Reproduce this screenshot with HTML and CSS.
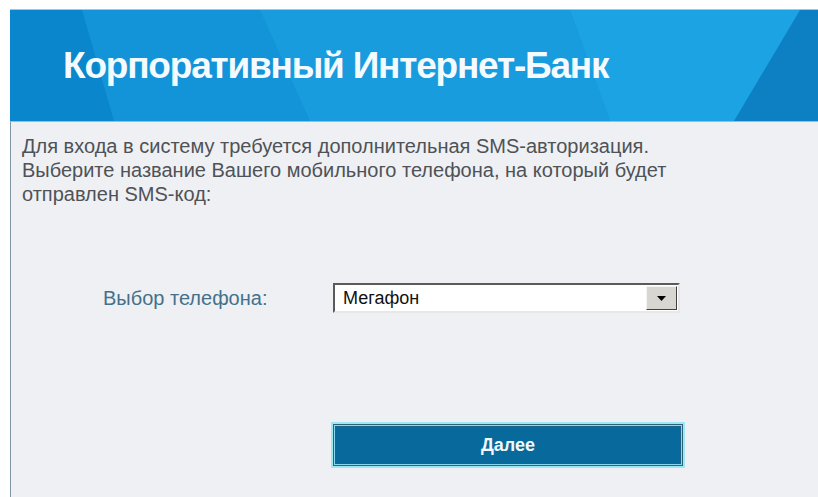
FILE: index.html
```html
<!DOCTYPE html>
<html lang="ru">
<head>
<meta charset="utf-8">
<title>Корпоративный Интернет-Банк</title>
<link rel="stylesheet" href="styles.css">
</head>
<body>
<div class="panel">
  <header class="banner">
    <svg class="banner-bg" viewBox="0 0 808 111" preserveAspectRatio="none" aria-hidden="true">
      <rect width="808" height="111" fill="#1393d8"/>
      <polygon points="0,0 72,0 104,111 0,111" fill="#0a86cd"/>
      <polygon points="250,0 560,0 600,111 300,111" fill="#189cde"/>
      <polygon points="560,0 790,0 735,111 600,111" fill="#1ba3e4"/>
      <polygon points="790,0 808,0 808,111 724,111" fill="#0c80c2"/>
    </svg>
    <h1 class="banner-title">Корпоративный Интернет-Банк</h1>
  </header>
  <main class="content">
    <p class="intro">Для входа в систему требуется дополнительная SMS-авторизация.<br>Выберите название Вашего мобильного телефона, на который будет<br>отправлен SMS-код:</p>
    <div class="field-row">
      <label class="field-label" for="phone">Выбор телефона:</label>
      <div class="select">
        <span class="select-value" id="phone">Мегафон</span>
        <span class="select-arrow">
          <svg width="9" height="5" viewBox="0 0 9 5"><path d="M0 0h9L4.5 5z" fill="#000"/></svg>
        </span>
      </div>
    </div>
    <div class="actions">
      <button class="next-btn" type="button">Далее</button>
    </div>
  </main>
</div>
</body>
</html>
```
FILE: styles.css
```css
html, body {
  margin: 0;
  padding: 0;
  background: #ffffff;
}

.panel {
  padding: 9px 0 0 10px;
  height: 488px;
  display: flex;
  flex-direction: column;
}

/* top banner with the slanted light/dark panels behind the title */
.banner {
  position: relative;
  height: 113px;
  border-top: 1px solid #7fd4f0;
  border-bottom: 1px solid #6fcdf0;
  box-sizing: border-box;
  display: flex;
  align-items: center;
}

.banner-bg {
  position: absolute;
  left: 0;
  top: 0;
  width: 100%;
  height: 100%;
}

.banner-title {
  position: relative;
  margin: 0 0 0 53px;
  font-family: "Liberation Sans", Arial, sans-serif;
  font-weight: bold;
  font-size: 37px;
  letter-spacing: -1.2px;
  color: #f4fbff;
  white-space: nowrap;
}

.content {
  flex: 1;
  background: #eef0f3;
  border-left: 1px solid #7f95a3;
  padding: 12px 0 0 11px;
  font-family: "Liberation Sans", Arial, sans-serif;
}

.intro {
  margin: 0;
  font-size: 20px;
  line-height: 24px;
  color: #4f5257;
  white-space: nowrap;
}

.field-row {
  display: flex;
  align-items: center;
  margin-top: 77px;
  padding-left: 81px;
}

.field-label {
  width: 230px;
  font-size: 20px;
  color: #44708a;
}

.select {
  width: 347px;
  height: 30px;
  box-sizing: border-box;
  border: 2px solid;
  border-color: #5a5a5a #e8e8e8 #e8e8e8 #5a5a5a;
  background: #fff;
  display: flex;
  align-items: center;
  justify-content: space-between;
}

.select-value {
  padding-left: 8px;
  font-size: 18px;
  color: #111;
}

.select-arrow {
  width: 31px;
  height: 24px;
  margin-right: 1px;
  box-sizing: border-box;
  background: #d8d6d0;
  border: 1px solid;
  border-color: #f4f4f4 #404040 #404040 #f4f4f4;
  display: flex;
  align-items: center;
  justify-content: center;
}

.actions {
  margin-top: 111px;
  padding-left: 311px;
}

.next-btn {
  width: 350px;
  height: 42px;
  box-sizing: border-box;
  padding: 0;
  border: 1px solid #2f6478;
  outline: 2px solid #9fe6f6;
  outline-offset: 0;
  box-shadow: inset 0 0 0 1px #8ad8ee, inset 0 0 0 2px #1a6688;
  background: #086a9c;
  color: #f2f8fb;
  font-family: "Liberation Sans", Arial, sans-serif;
  font-weight: bold;
  font-size: 18px;
}
```
